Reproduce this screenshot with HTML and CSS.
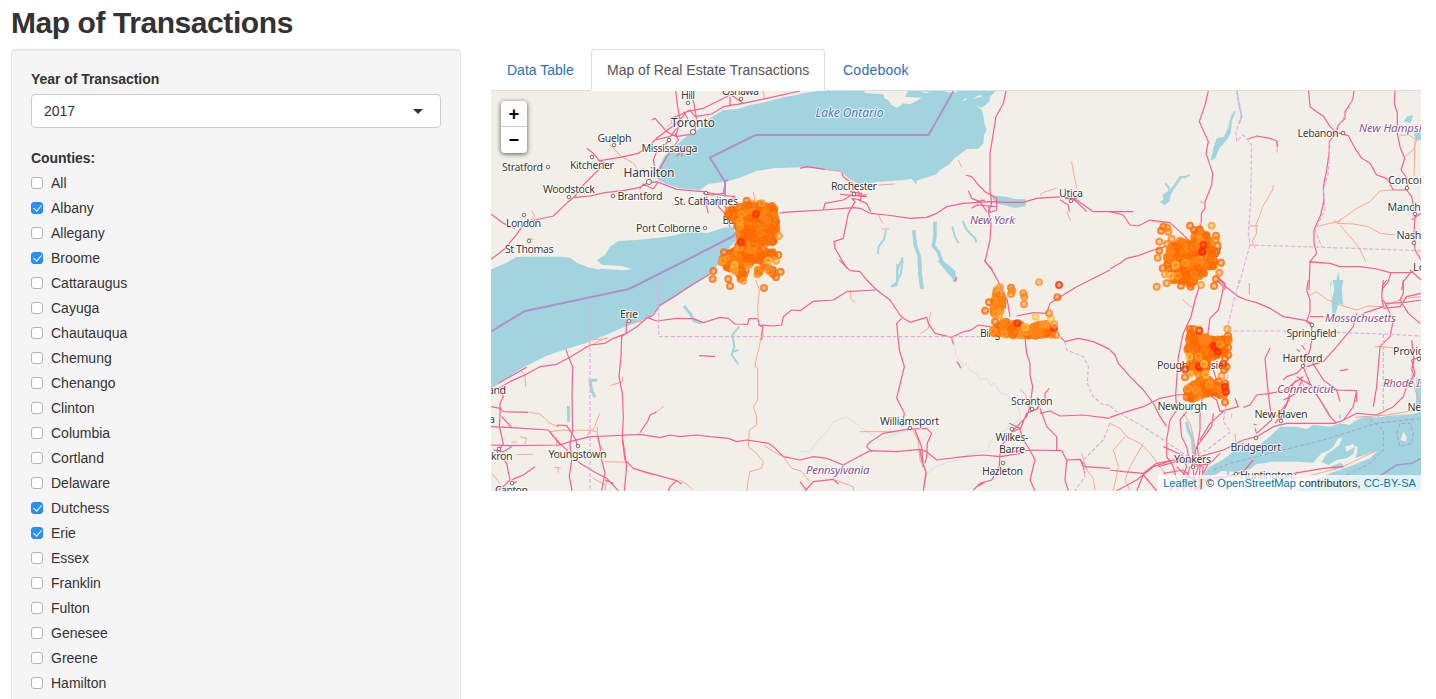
FILE: index.html
```html
<!DOCTYPE html>
<html lang="en">
<head>
<meta charset="utf-8">
<title>Map of Transactions</title>
<link rel="stylesheet" href="styles.css">
</head>
<body>
<h2 class="title">Map of Transactions</h2>
<div class="layout">
  <form class="well">
    <div class="label">Year of Transaction</div>
    <div class="select"><span class="value">2017</span><span class="caret"></span></div>
    <div class="label counties-label">Counties:</div>
    <div class="counties">
      <label class="check"><input type="checkbox"><span>All</span></label>
      <label class="check"><input type="checkbox" checked><span>Albany</span></label>
      <label class="check"><input type="checkbox"><span>Allegany</span></label>
      <label class="check"><input type="checkbox" checked><span>Broome</span></label>
      <label class="check"><input type="checkbox"><span>Cattaraugus</span></label>
      <label class="check"><input type="checkbox"><span>Cayuga</span></label>
      <label class="check"><input type="checkbox"><span>Chautauqua</span></label>
      <label class="check"><input type="checkbox"><span>Chemung</span></label>
      <label class="check"><input type="checkbox"><span>Chenango</span></label>
      <label class="check"><input type="checkbox"><span>Clinton</span></label>
      <label class="check"><input type="checkbox"><span>Columbia</span></label>
      <label class="check"><input type="checkbox"><span>Cortland</span></label>
      <label class="check"><input type="checkbox"><span>Delaware</span></label>
      <label class="check"><input type="checkbox" checked><span>Dutchess</span></label>
      <label class="check"><input type="checkbox" checked><span>Erie</span></label>
      <label class="check"><input type="checkbox"><span>Essex</span></label>
      <label class="check"><input type="checkbox"><span>Franklin</span></label>
      <label class="check"><input type="checkbox"><span>Fulton</span></label>
      <label class="check"><input type="checkbox"><span>Genesee</span></label>
      <label class="check"><input type="checkbox"><span>Greene</span></label>
      <label class="check"><input type="checkbox"><span>Hamilton</span></label>
    </div>
  </form>
  <main class="main">
    <nav class="tabs">
      <a class="tab tab-data">Data Table</a>
      <a class="tab tab-map active">Map of Real Estate Transactions</a>
      <a class="tab tab-code">Codebook</a>
    </nav>
    <div class="map">
      <svg class="tiles" width="930" height="400" viewBox="491 91 930 400">
        <rect class="land" x="491" y="91" width="930" height="400"/>

        <!-- lakes and sea -->
        <g transform="translate(490 40) scale(.33333)">
          <path class="water" d="M960 150L930 163L880 172L830 185L780 195L740 208L700 210L680 222L655 238L640 258L615 275L590 288L565 310L545 330L522 350L510 375L497 395L502 418L530 433L570 445L630 450L655 432L705 425L745 415L800 393L850 385L930 382L990 387L1055 397L1075 415L1105 432L1170 425L1240 420L1265 417L1280 435L1280 422L1325 407L1340 402L1350 390L1375 375L1395 353L1430 328L1465 326L1480 310L1482 285L1490 270L1483 250L1478 215L1468 203L1455 195L1475 203L1498 185L1500 170L1520 150Z"/>
          <path class="land" d="M1115 150L1130 160L1180 162L1183 175L1195 180L1205 195L1222 203L1240 190L1260 193L1285 180L1295 173L1245 170L1255 150ZM930 150L940 160L985 152ZM1290 155L1308 160L1320 155ZM1350 150L1390 160L1410 150ZM1415 185L1425 175L1432 178ZM1450 178L1465 165L1480 168L1460 174Z"/>
          <path class="water" d="M0 690L25 678L50 668L80 650L130 646L205 648L245 655L262 670L300 682L330 690L318 662L345 645L360 620L385 603L440 600L520 592L560 585L600 573L650 580L700 563L730 560L740 600L712 630L690 665L665 700L610 735L550 775L510 800L480 830L440 848L400 862L360 880L290 908L230 927L170 947L100 982L50 1015L0 1050Z"/>
          <path class="land" d="M-5 692L20 680L60 661L60 650L235 650L262 668L300 684L400 691L428 688L395 678L335 674L320 660L240 640L-5 640Z"/>
          <path class="water" d="M1503 466L1550 470L1575 477L1608 478L1607 499L1575 504L1540 495L1515 492Z"/>
          <path class="lake" style="stroke-width:2" d="M1188 570L1182 598L1166 620L1163 642M1238 652L1222 690L1220 735L1205 740M1387 560L1395 590L1406 610M1418 543L1430 570L1455 595L1460 607"/>
          <path class="lake" style="stroke-width:3.6" d="M1271 570L1276 615L1288 650L1290 700L1295 745M1335 545L1335 590L1330 618L1345 635L1355 665L1390 695L1395 722"/>
        </g>
        <g transform="translate(490 260) scale(.33333)">
          <path class="lake" style="stroke-width:3" d="M582 138L600 160L612 182L635 190M322 360L300 362L305 390L315 412M235 438L236 485"/>
          <path class="lake" style="stroke-width:2" d="M748 200L727 225L733 260L725 285L745 312M732 274L745 270"/>
        </g>
        <g transform="translate(1110 90) scale(.33333)">
          <path class="lake" style="stroke-width:2" d="M239 254L225 262L212 260L195 285L180 305M166 280L178 296"/>
          <path class="water" d="M240 254L210 262L196 285L180 300L172 285L175 303L157 315L160 330L150 335L163 345L178 335L182 315L192 298L204 280L216 264ZM372 62L362 80L355 110L342 140L320 145L310 175L302 212L316 205L328 175L350 150L362 130L366 90L377 65Z"/>
          <path class="lake" style="stroke-width:1.6" d="M380 0L387 45L395 80L388 100"/>
          <path class="water" d="M685 546L675 590L665 630L660 580L670 700L685 640L700 645L695 600ZM880 95L893 78L910 76L902 98ZM910 130L933 123L933 150L918 150ZM665 570L660 578L662 597Z"/>
        </g>
        <g transform="translate(1110 280) scale(.33333)">
          <path class="water" d="M270 595L300 560L345 535L372 512L440 500L470 478L500 450L510 440L560 440L590 448L610 435L660 440L690 430L720 435L735 422L770 408L800 413L830 408L860 405L905 403L933 395V640H280Z"/>
          <path class="land" d="M285 602L315 585L335 573L375 575L420 568L440 552L465 550L480 545L560 545L610 548L625 530L635 520L655 512L670 500L685 475L697 473L688 495L672 508L650 522L635 545L655 555L680 540L710 535L730 522L735 500L742 498L742 515L735 535L780 518L802 512L780 535L730 555L660 580L600 605L540 640H285ZM872 480L880 455L890 470L888 485ZM705 500L730 492L735 500L710 515Z"/>
          <path class="water" d="M350 590L352 568L358 575L356 588L395 586L398 568L400 590ZM660 560L690 548L705 558L675 570Z"/>
          <path class="lake" style="stroke-width:3.2" d="M230 425L235 450L247 475L250 510L252 550"/>
          <path class="lake" style="stroke-width:1" d="M590 300L610 335L640 370L665 415M920 290V375M928 300L932 340"/>
          <path class="water" d="M918 320L933 290V380H918ZM800 415L810 400L805 420ZM685 410L690 400L695 420ZM668 0L678 60L690 60L700 0Z"/>
        </g>
        <g transform="translate(800 260) scale(.33333)">
          <path class="lake" style="stroke-width:3.6" d="M358 0L360 40L367 88M418 0L440 28L460 50L465 65"/>
          <path class="lake" style="stroke-width:2" d="M308 0L303 40L290 68L273 80M292 12V62"/>
          <path class="river" d="M462 235L468 290L485 310L500 315L515 335L530 340L540 360L560 355L572 375L585 370L600 398L625 405L635 430L655 440L662 475L630 500L570 545L565 570L500 585L480 600L445 605L400 625L378 645L370 692M0 575L30 575L55 540L85 510L100 485L140 470L180 500L200 515L240 540L290 520L330 510L360 545L385 525"/>
        </g>

        <!-- minor roads -->
        <g transform="translate(490 40) scale(.33333)">
          <path class="minor" d="M360 315L395 350L430 370L455 405M125 512L135 530L120 542M820 153L823 175M540 230L545 250L530 260M113 595L130 598M790 455L795 480M1005 388L1060 395M1165 435L1215 432M1405 360L1415 382M1745 365L1752 405L1760 445M1165 525L1178 550M1175 567L1197 567M1650 465L1665 455L1700 445M1730 515L1742 542M450 440L450 455M1472 475L1490 490"/>
        </g>
        <g transform="translate(490 260) scale(.33333)">
          <path class="minor" d="M797 60L808 90L803 140L805 170M818 200L808 260L800 290L795 320L803 325L803 420L790 440L800 470L800 495L778 510L775 560L800 580L820 605L815 625L780 635L775 660L770 692M360 377L398 365L398 350M118 457L150 462L180 490L200 498M180 515L215 510L240 512L310 510L330 458M290 530L300 512L320 515M322 500L322 540L338 570M345 605L410 607M455 635L490 645M570 662L590 672L608 690M820 555L850 575L880 590L905 625L930 632M310 240L352 235M290 262L350 232M410 182L455 184M65 547L80 545M90 530L110 535L105 552M200 530L200 560M80 584L128 583M193 622L212 624M203 622L205 638M310 655L345 675M350 660L345 692M5 640L30 670M70 655L100 645M90 330L105 345L107 380M500 455L520 440"/>
          <path class="minor" d="M1082 93L1083 115L1095 128M1323 155L1315 190L1315 205L1290 222M1270 510L1285 545L1290 600L1310 640L1300 692M1110 515L1220 515M1590 388L1608 405L1612 440M1775 580L1790 630L1810 655L1815 690M930 630L960 665M1035 660L1090 680L1090 692"/>
        </g>
        <g transform="translate(1110 90) scale(.33333)">
          <path class="minor" d="M490 285L488 300L458 350L450 375L438 403L440 430L427 455L437 475M418 408L445 407M500 150L502 188M620 410L660 400L685 395L740 355L780 335L810 303L850 300M685 400L730 402L775 410L810 430L855 435M690 405L720 440L745 470L768 515M870 135L900 137L920 150L910 180L885 200M915 150L912 260M600 517L640 520M418 580V610M270 335L285 340M125 395L180 398M670 390L685 402L690 388"/>
        </g>
        <g transform="translate(1110 280) scale(.33333)">
          <path class="minor" d="M218 58L235 75L250 85M418 10V45M600 45L620 35L650 58L690 75L740 90L775 78L820 80L880 55L933 50M0 430L30 445L50 470L90 490L120 520L150 560L180 600M45 470L10 510L25 560L10 632M100 490L60 560L45 600L60 632M365 400L365 415M375 460L378 500M220 400L240 430L250 470L260 540M795 200L820 200L860 205M735 412L830 405L890 395L933 390M540 600L620 582L700 560L760 530L800 512M570 290L590 340M905 280L915 330L933 372"/>
        </g>

        <!-- highways -->
        <g transform="translate(490 40) scale(.33333)">
          <path class="road" d="M3 522L40 550L75 565M3 658L40 630L75 590L100 555L135 540L190 528L235 485L250 473L300 468L345 458L400 452L450 442L470 430L500 425L560 448L640 455L690 465L735 470L705 500L720 520M252 472L275 440L310 405L345 370L330 362L390 352L445 340L480 315L500 295L560 250L590 215L640 205L680 185L710 170L720 163L760 190M290 325L310 340L330 365M485 240L495 235L530 275L560 290M495 300L540 290L560 265M540 235L570 225L600 210L615 230L665 222L700 200L760 190L830 175L930 153M557 153L563 200L570 240L558 290L600 283L615 270L620 240L612 190L600 153M575 350L580 325L560 350M497 400L490 360L500 335L540 300M505 395L530 350L565 300L555 280M505 425L490 447L460 432L450 445M640 460L665 465L700 460L705 430M703 425L715 420M650 470L650 500L655 520M682 470L685 500L705 520L720 560M870 520L880 517L930 514L1000 510L1090 503L1110 505L1140 520L1190 525L1260 535L1310 532L1340 520L1370 500L1420 490L1500 485L1560 487L1600 487L1640 475L1720 470L1760 480L1810 515L1930 515M1740 470L1765 490L1790 515M720 170L720 195L740 195M580 215L595 240"/>
          <path class="road" d="M930 385L950 380L1005 388M1055 397L1060 410L1100 440L1110 470M1000 510L1005 490L1060 480L1085 465L1130 465M1085 475L1095 485L1075 520L1070 545L1060 595L1032 605L1035 625L1070 685M1080 455L1115 460L1112 480L1085 475M1050 463L1130 470M1105 480L1130 490L1142 515M1548 153L1540 190L1518 230L1505 310L1500 340L1500 450L1505 490L1495 515L1503 550L1500 600L1485 665L1508 690M1427 405L1445 410L1465 435L1485 455L1520 475L1520 510L1500 517L1495 500M1435 452L1445 475L1470 485L1490 515M1445 505L1460 495L1520 500M1460 485L1485 480M1710 480L1735 495L1738 515M1725 475L1760 475"/>
        </g>
        <g transform="translate(490 260) scale(.33333)">
          <path class="road" d="M660 42L630 60L590 85L560 105L510 135L490 165L470 175L440 200L410 220L370 235L345 250L300 255L240 292L200 313L150 320L100 347L60 365L35 380M25 370L60 350L110 322M228 268L235 290L248 320L246 400L248 510L240 550L245 600L238 650L246 692M410 185L408 220L395 230L393 290L387 350L397 400L400 470L397 530L410 620L403 692M470 172L500 183L560 175L610 176L640 188L690 172L715 175L735 192L773 193L777 176L803 176L808 195L850 198L875 195L880 170L905 150L930 152L970 124L1030 120L1070 95L1155 90M805 195L818 200L815 240"/>
          <path class="road" d="M2 440L30 445L40 455L115 457M2 500L50 502L175 510L190 530L250 590L270 610L320 640L350 655L385 692M30 380L40 410L30 430L30 470L28 500L40 550L25 575M2 555L65 557L210 555L240 545L300 530L350 528L450 523L510 533L540 525L570 530L620 525L660 530L715 535L740 545L770 540L835 550L850 560L880 590L930 600L970 590L1010 595L1060 615L1105 590L1140 572L1220 575L1290 568L1310 575L1340 600L1420 590L1480 585L1530 590L1595 580M35 470L65 502M200 500L205 495L230 497L240 512L258 540L260 555M180 515L210 555M325 530L330 560L335 600L345 640L335 692M397 540L405 600L430 625L480 640L560 662L540 680L535 692M560 662L575 672M450 518L475 480L480 465L500 455M10 570L40 575L65 560M20 575L50 610L60 660L45 675L25 690M65 660L100 645L135 620M60 672L80 665M627 287L675 290M345 660L370 670"/>
        </g>
        <g transform="translate(800 260) scale(.33333)">
          <path class="road" d="M118 0L150 32L180 35L200 60L230 90L270 120L300 165L310 175L330 187L380 172L385 190L405 220L455 232L490 215L510 212L535 195L570 200M305 175L290 190L298 270L313 320L303 360L290 415L313 460L305 500M455 235L460 253M470 305L478 315L482 325M465 65L470 52M553 0L575 30L595 65L622 120L630 170M650 168L700 158L740 160L750 130L830 80L900 45L930 30M780 230L795 245L835 235L880 245L930 268M675 235L680 280L690 310L690 345L698 380L690 440L680 470L640 510L610 550L600 580L598 620L575 660L540 670L520 690M628 490L660 505L640 515M715 445L680 460L660 510L670 540L690 570L705 600L690 660L705 692M720 445L740 500L770 530L770 570M735 400L748 385M710 445L735 420L735 400M720 460L750 453L780 468L850 465L930 475M600 580L640 575L700 570L785 572L800 600L840 598L855 620L930 625M800 600L795 660L805 692M840 598L850 620L855 640M200 560L205 550L250 520L320 508L380 505L395 520L382 550L380 590L375 610M345 510L365 560L370 620M200 560L215 575M0 665L20 692M18 690L40 665L100 658L115 672M130 615L100 655M360 570L365 600L378 635L370 692M530 680L550 670"/>
        </g>
        <g transform="translate(1110 90) scale(.33333)">
          <path class="road" d="M295 3L285 45L268 95L295 155L288 190L308 250L305 285L285 335L285 355L274 370L274 400M0 365L40 375L60 405L85 408L120 390L180 398L215 430L245 460M0 537L30 520L50 505L85 497L130 480L165 470M415 147L440 138L480 145L500 153L503 170M596 3L600 50L620 65L640 78L660 110L680 127L715 137L735 175L755 205L780 220L800 255L830 265L850 300L890 300L905 320L915 370L912 440L915 480L933 510M732 3L728 30L705 65L705 85L685 105L680 127L658 155L658 185L650 240L640 290L642 330L632 375L612 420L612 460L620 490L600 515L597 600M855 3L853 40L862 70L862 130L870 170L884 205L873 240L895 270L890 300M597 515L660 520L690 530L750 530L800 537L840 548L900 548L933 540M842 550L835 575L815 600M900 550L880 575L875 600M900 540L933 570M905 390L933 370M270 400L275 430L270 480M320 560L345 580L345 600"/>
        </g>
        <g transform="translate(1110 280) scale(.33333)">
          <path class="road" d="M268 20L255 60L243 110L220 160L205 230L200 300L197 345L200 390L180 420L170 480L170 530L190 560L200 600L180 632M320 0L340 20L335 50L325 90L300 115L295 150L290 200L300 240L320 300L290 330L275 360L270 400L270 450L262 500L270 560L265 632M330 0L345 18L385 50L410 60L440 68L480 85L520 110L590 122L605 130M595 0L590 30L600 60L600 95L590 125L605 135L605 180L600 210L580 255M600 110L640 110M480 205L465 235L472 310L475 340L485 420L440 460M400 382L420 375L440 345L480 340L530 330L560 300M375 355L385 380L330 395L320 360L290 340M0 210L15 225L25 250L60 290L100 330L130 370L150 410L170 440M0 412L50 395L100 380L150 355L200 345L290 340M0 570L40 575L100 580L140 550L190 540L240 545L270 530L340 510L400 480L440 470L490 440L530 430L600 430L670 430L690 425L740 400L800 405L850 380L880 350L890 320L915 280L905 240L933 230M590 260L640 245L680 200L730 140L740 100M580 260L560 280L530 290L520 300M560 290L610 320L680 330L740 332L730 380L700 420M580 262L600 310L660 410L680 430M580 260L590 220L640 300L680 330L690 365M690 272L715 268M440 435L430 432M440 460L435 445M740 335L740 365M820 60L850 120L840 170L810 200L800 320L790 380M825 70L880 68L933 60M820 85L870 80L890 50L933 40M880 0L880 40L870 60L895 100L930 130M820 0L815 50L820 80L760 100L740 120M905 180L912 240L905 270L915 290M560 208L570 215M575 195L585 210M830 0L815 20M230 395L210 420L215 470L230 500L240 550M340 395L300 430L270 480M310 400L305 440L260 500L245 560M100 585L80 632M100 585L140 632M190 540L130 560L80 600L20 632M145 560L215 540L280 560M200 560L230 590L270 600L340 590M160 580L220 570L250 600M250 560L300 550L330 520M160 500L215 525L230 560L200 632M240 560L220 632M265 560L240 632M280 560L270 632M250 570L255 632M290 600L250 632M300 540L280 580M550 580L640 565L700 560M560 575L550 600M430 540L400 575L320 600M520 360L560 340L575 300M500 410L530 370L550 310L580 290M495 430L520 400L510 420L540 350"/>
        </g>

        <!-- boundaries -->
        <g transform="translate(490 40) scale(.33333)">
          <path class="border" d="M0 876L103 814L417 747L590 660L730 588L740 575M705 470L705 425L660 353L797 285H1316L1390 153"/>
        </g>
        <g transform="translate(490 260) scale(.33333)">
          <path class="state" d="M300 117V692M506 50V230H1470"/>
        </g>
        <g transform="translate(800 260) scale(.33333)">
          <path class="state" d="M795 245L800 270L850 290L865 320L862 370L880 410L905 432L930 436M930 490L910 540L850 600L855 650L825 692"/>
        </g>
        <g transform="translate(1110 90) scale(.33333)">
          <path class="state" d="M380 3L395 75L378 125L380 155L400 135L410 145L425 165L422 330L415 430L420 465L640 472L933 482M420 465L385 590M728 30L700 85L685 105L660 150L655 250L640 300L645 360L615 420L635 470"/>
        </g>
        <g transform="translate(1110 280) scale(.33333)">
          <path class="state" d="M388 0L355 130L352 350L340 425L362 455L290 510L200 550M355 153H520L700 158L820 162L933 168M820 162V400M0 378L20 395L100 440L160 480L220 520L250 540"/>
          <path class="state sea" d="M310 570L360 550L500 515L640 480L800 430L933 415M780 418L820 450V510L780 550L680 600M860 460L870 430H900L910 460L905 490L870 500Z"/>
          <path class="border thin" d="M790 600L860 555L905 550L933 535"/>
        </g>

        <g class="towns"></g>

        <!-- place names -->
        <g class="names">
          <text x="681" y="99" textLength="14">Hill</text>
          <text x="722" y="95" textLength="37">Oshawa</text>
          <text class="city" x="671" y="127" textLength="44">Toronto</text>
          <text x="597.500" y="141.500" textLength="34">Guelph</text>
          <text x="641.500" y="152" textLength="56">Mississauga</text>
          <text x="570" y="168.500" textLength="44">Kitchener</text>
          <text x="502" y="171" textLength="41">Stratford</text>
          <text class="city" x="623.500" y="177" textLength="51">Hamilton</text>
          <text x="543" y="193" textLength="52">Woodstock</text>
          <text x="617.500" y="200" textLength="45">Brantford</text>
          <text x="674" y="204.500" textLength="64">St. Catharines</text>
          <text x="722.500" y="224" textLength="30">Buffalo</text>
          <text x="506" y="227" textLength="35">London</text>
          <text x="636" y="232" textLength="64.500">Port Colborne</text>
          <text x="505" y="252.500" textLength="48.500">St Thomas</text>
          <text x="620" y="317.500" textLength="18">Erie</text>
          <text x="488" y="393.500" textLength="18">and</text>
          <text x="489" y="423">a</text>
          <text x="491" y="460" textLength="21.500">kron</text>
          <text x="548.500" y="458" textLength="58">Youngstown</text>
          <text x="495" y="494" textLength="33">Canton</text>
          <text x="831" y="190" textLength="46">Rochester</text>
          <text x="1059" y="197" textLength="24">Utica</text>
          <text x="980" y="337" textLength="56">Binghamton</text>
          <text x="1011" y="405" textLength="41.500">Scranton</text>
          <text x="880" y="424.500" textLength="59">Williamsport</text>
          <text x="995.500" y="440.500" textLength="33">Wilkes-</text>
          <text x="999" y="453" textLength="26">Barre</text>
          <text x="982" y="474.500" textLength="41">Hazleton</text>
          <text x="1186" y="254" textLength="35">Albany</text>
          <text x="1297.500" y="137" textLength="41">Lebanon</text>
          <text x="1388" y="183.500" textLength="42">Concord</text>
          <text x="1387.500" y="210.500" textLength="58">Manchester</text>
          <text x="1396.500" y="239" textLength="37">Nashua</text>
          <text x="1413" y="271" textLength="33">Lowell</text>
          <text x="1286.500" y="336.500" textLength="50">Springfield</text>
          <text x="1282.500" y="362" textLength="40">Hartford</text>
          <text x="1393" y="354.500" textLength="55">Providence</text>
          <text x="1157" y="369" textLength="67">Poughkeepsie</text>
          <text x="1157.500" y="409.500" textLength="49.500">Newburgh</text>
          <text x="1254.500" y="417.500" textLength="53">New Haven</text>
          <text x="1407.500" y="411" textLength="41">Newport</text>
          <text x="1230.500" y="450.500" textLength="50.500">Bridgeport</text>
          <text x="1174" y="463" textLength="37">Yonkers</text>
          <text x="1240" y="478.500" textLength="53">Huntington</text>
          <text class="lake-name" x="815.500" y="117" textLength="68">Lake Ontario</text>
          <text class="region" x="970" y="224" textLength="45">New York</text>
          <text class="region" x="806" y="474" textLength="63.500">Pennsylvania</text>
          <text class="region" x="1359" y="131.500" textLength="79">New Hampshire</text>
          <text class="region" x="1325" y="321.500" textLength="71">Massachusetts</text>
          <text class="region" x="1277" y="393" textLength="57">Connecticut</text>
          <text class="region" x="1383" y="387" textLength="63">Rhode Island</text>
        </g>
        <g class="sales"></g>
      </svg>
      <div class="zoom"><a>+</a><a>−</a></div>
      <div class="attribution"><a>Leaflet</a> | © <a>OpenStreetMap</a> contributors, <a>CC-BY-SA</a></div>
    </div>
  </main>
</div>
<script src="map.js"></script>
</body>
</html>
```
FILE: styles.css
```css
* { box-sizing: border-box; }
html, body { height: 100%; }
body {
  margin: 0;
  padding: 6px 15px 0 11px;
  overflow: hidden;
  background: #fff;
  color: #333;
  font: 14px/20px "Helvetica Neue", "Liberation Sans", Arial, sans-serif;
}
.title {
  margin: 0 0 10px;
  font-size: 30px;
  line-height: 33px;
  font-weight: bold;
  letter-spacing: -.43px;
}
.layout { display: flex; align-items: flex-start; gap: 30px; }
.well {
  flex: none;
  width: 450px;
  padding: 19px 19px 6px;
  border: 1px solid #e3e3e3;
  border-bottom: 0;
  border-radius: 4px 4px 0 0;
  background: #f5f5f5;
  box-shadow: inset 0 1px 1px rgba(0, 0, 0, .05);
}
.label { font-weight: bold; margin-bottom: 5px; letter-spacing: -.05px; }
.select {
  display: flex;
  align-items: center;
  justify-content: space-between;
  height: 34px;
  padding: 0 17px 0 12px;
  border: 1px solid #ccc;
  border-radius: 4px;
  background: #fff;
}
.caret {
  border: 5px solid transparent;
  border-top-color: #333;
  border-bottom: 0;
}
.counties-label { margin-top: 20px; }
.counties { display: grid; grid-auto-rows: 20px; row-gap: 5px; }
.check { display: flex; align-items: center; gap: 8px; }
.check input {
  appearance: none;
  display: grid;
  place-items: center;
  width: 12px;
  height: 12px;
  margin: 0;
  border: 1px solid #b4b4b4;
  border-radius: 3px;
  background: #fff;
}
.check input:checked { border-color: #2287fb; background: #2b90ff; }
.check input:checked::after {
  content: "";
  width: 4px;
  height: 7px;
  margin-top: -2px;
  border: solid #fff;
  border-width: 0 1.600px 1.600px 0;
  transform: rotate(40deg);
}
.main { flex: none; width: 930px; }
.tabs { display: flex; gap: 2px; height: 42px; border-bottom: 1px solid #ddd; }
.tab {
  width: 98px;
  height: 42px;
  padding: 10px 0 0 15px;
  border: 1px solid transparent;
  border-radius: 4px 4px 0 0;
  color: #2a70b8;
  white-space: nowrap;
}
.tab-map { width: 234px; }
.tab-code { letter-spacing: .25px; }
.active { border-color: #ddd #ddd #fff; background: #fff; color: #555; }
.map { position: relative; height: 400px; overflow: hidden; }
.tiles { display: block; }
.land { fill: #f2efe9; }
.water { fill: #a2d4e0; }
.lake, .river, .minor, .road, .border, .state {
  fill: none;
  stroke-linejoin: round;
  vector-effect: non-scaling-stroke;
}
.lake { stroke: #a2d4e0; }
.river { stroke: #c5e1e5; stroke-width: .8; }
.minor { stroke: #fca78c; stroke-width: 1; }
.road { stroke: #f5618e; stroke-width: 1.200; }
.border { stroke: #b08fca; stroke-width: 2; }
.thin { stroke-width: 1.500; }
.state { stroke: #dfaedb; stroke-width: 1.200; stroke-dasharray: 4 2; }
.sea { stroke: #a99fd0; stroke-width: 1; }
.names {
  font: 10.700px "Noto Sans", sans-serif;
  fill: #383838;
  stroke: rgba(255, 255, 255, .75);
  stroke-width: 2px;
  stroke-linejoin: round;
  paint-order: stroke;
}
.city { font-size: 12px; }
.region { font-size: 11.500px; font-style: italic; fill: #8b5290; }
.lake-name { font-size: 12px; font-style: italic; fill: #4a7ab0; }
.town { fill: #f2efe9; stroke: #555; stroke-width: .8; }
.zoom {
  position: absolute;
  left: 10px;
  top: 10px;
  width: 26px;
  border-radius: 4px;
  background: #fff;
  box-shadow: 0 1px 5px rgba(0, 0, 0, .65);
}
.zoom a {
  display: block;
  height: 26px;
  color: #000;
  font: bold 18px/28px "Liberation Mono", monospace;
  text-align: center;
}
.zoom a:first-child { border-bottom: 1px solid #ccc; line-height: 29px; }
.attribution {
  position: absolute;
  right: 0;
  bottom: 0;
  padding: 0 5px;
  background: rgba(255, 255, 255, .7);
  font-size: 11px;
  line-height: 16px;
  letter-spacing: .08px;
}
.attribution a { color: #0078a8; }
```
FILE: map.js
```js
const NS = "http://www.w3.org/2000/svg";
function circle(parent, x, y, r, attrs) {
  const c = document.createElementNS(NS, "circle");
  c.setAttribute("cx", x);
  c.setAttribute("cy", y);
  c.setAttribute("r", r);
  for (const key in attrs) c.setAttribute(key, attrs[key]);
  parent.appendChild(c);
}

const towns = document.querySelector(".towns");
[[688,103,1.8],[741,99,1.8],[693,132,2.6],[614,145,1.8],[669,140,1.8],[592,157,1.8],[548,167,1.8],
 [649,182,2.6],[569,197,1.8],[613,196,1.8],[706,193,1.8],[524,215,1.8],[705,228,1.8],[529,241,1.8],
 [629,321,1.8],[578,446,1.8],[499,449,1.8],[512,483,1.8],[854,194,1.8],[1071,201,1.8],[1032,409,1.8],
 [910,428,1.8],[1012,429,1.8],[1003,463,1.8],[1343,133,1.8],[1407,188,1.8],[1415,214,1.8],[1414,243,1.8],
 [1312,325,1.8],[1303,366,1.8],[1419,359,1.8],[1281,421,1.8],[1256,438,1.8],[1193,467,1.8],[1236,474,1.8]
].forEach(([x, y, r]) => circle(towns, x, y, r, { class: "town" }));

// Repeatable pseudo-random sequence, so that the scatter is stable.
let seed = 7;
function rnd() {
  seed = (seed * 16807) % 2147483647;
  return seed / 2147483647;
}
function inside(x, y, poly) {
  let hit = false;
  for (let i = 0, j = poly.length - 1; i < poly.length; j = i++) {
    const [xi, yi] = poly[i], [xj, yj] = poly[j];
    if (yi > y !== yj > y && x < (xj - xi) * (y - yi) / (yj - yi) + xi) hit = !hit;
  }
  return hit;
}
const sales = document.querySelector(".sales");
const colors = { y: "#ffc04a", l: "#ff9a2b", o: "#ff8317", d: "#ff6c00", r: "#ff2a05" };
function sale(x, y, key) {
  circle(sales, x, y, 3, {
    fill: colors[key], "fill-opacity": .35,
    stroke: colors[key], "stroke-width": 2, "stroke-opacity": .8
  });
}
function scatter(poly, count, mix) {
  const xs = poly.map(p => p[0]), ys = poly.map(p => p[1]);
  const x0 = Math.min(...xs), x1 = Math.max(...xs), y0 = Math.min(...ys), y1 = Math.max(...ys);
  while (count > 0) {
    const x = x0 + rnd() * (x1 - x0), y = y0 + rnd() * (y1 - y0);
    if (!inside(x, y, poly)) continue;
    sale(x, y, mix[Math.floor(rnd() * mix.length)]);
    count--;
  }
}
function points(ox, oy, list) {
  list.forEach(([x, y, key]) => sale(ox + x / 3, oy + y / 3, key));
}

const warm = "dddddddddddddooooollloddddddodddlood";
// Erie
scatter([[728,210],[736,208],[746,203],[760,204],[775,208],[777,226],[774,242],[748,246],[734,260],[730,258],[740,242],[738,230],[735,222],[727,214]], 400, warm);
scatter([[732,251],[748,244],[768,250],[776,256],[773,260],[755,261],[748,272],[742,278],[734,270],[720,266],[718,262]], 130, warm);
scatter([[757,263],[778,268],[773,275],[757,275]], 12, "ddool");
points(700, 190, [[38,267,"d"],[85,267,"d"],[90,288,"d"],[122,267,"d"],[130,272,"l"],[192,294,"d"],[237,138,"l"],
  [242,245,"d"],[228,262,"d"],[216,48,"d"],[140,32,"d"],[40,243,"d"],[72,187,"d"],[235,195,"d"],[228,212,"l"],
  [205,212,"y"],[168,72,"r"],[123,157,"r"],[103,225,"y"],[105,242,"l"],[120,108,"l"],[118,95,"l"],[125,72,"l"],
  [185,40,"l"],[180,130,"o"],[160,160,"d"],[87,72,"d"],[218,187,"d"],[180,245,"o"]]);
// Albany
scatter([[1169,246],[1180,243],[1190,240],[1198,229],[1206,230],[1210,243],[1215,262],[1212,270],[1200,276],[1194,286],[1188,284],[1172,280],[1166,262]], 330, "ddddddddooool");
points(1145, 215, [[35,215,"o"],[200,32,"l"],[135,32,"d"],[147,45,"d"],[55,35,"d"],[48,47,"d"],[67,38,"o"],[70,50,"o"],
  [43,80,"o"],[43,107,"d"],[38,128,"o"],[80,72,"o"],[67,87,"o"],[105,77,"o"],[53,160,"d"],[60,178,"l"],[92,150,"y"],
  [77,182,"y"],[98,182,"l"],[65,205,"o"],[108,212,"d"],[137,215,"d"],[168,210,"l"],[207,213,"d"],[213,192,"d"],
  [223,173,"o"],[228,143,"d"],[213,62,"d"],[212,75,"o"],[215,110,"d"],[218,92,"d"],[120,143,"l"],[115,107,"o"],[172,110,"r"],[175,90,"r"],[172,110,"r"]]);
// Dutchess
scatter([[1189,332],[1198,334],[1210,338],[1229,339],[1228,350],[1215,358],[1205,364],[1194,358],[1187,352]], 150, "ddddddooooldd");
scatter([[1190,355],[1202,358],[1208,363],[1204,377],[1194,377],[1190,372]], 38, "ddoold");
scatter([[1188,387],[1197,382],[1206,378],[1225,388],[1224,396],[1212,393],[1188,400],[1184,397]], 160, "dddddddoool");
points(1145, 315, [[247,42,"l"],[249,62,"d"],[162,43,"y"],[163,47,"r"],[240,205,"d"],[240,262,"d"],[230,182,"l"],[245,155,"d"],
  [235,147,"r"],[237,165,"d"],[240,130,"d"],[250,120,"d"],[162,155,"r"],[162,155,"r"],[177,147,"y"],[137,177,"y"],[120,163,"r"],
  [120,187,"d"],[183,178,"y"],[160,125,"l"],[133,125,"y"],[218,110,"r"],[210,97,"r"],[205,92,"r"],[225,88,"l"],[243,230,"r"],
  [240,215,"r"],[125,247,"d"],[192,210,"l"],[135,42,"d"],[145,42,"d"],[145,70,"d"],[185,70,"o"],[130,100,"d"],[220,200,"d"]]);
// Broome
scatter([[997,289],[1003,298],[1004,303],[998,318],[992,315],[993,300]], 42, "oolldo");
scatter([[993,328],[1008,321],[1022,325],[1030,328],[1040,323],[1052,325],[1055,336],[1020,336],[992,334]], 190, "ooooldddl");
points(970, 270, [[207,37,"l"],[267,45,"r"],[262,82,"d"],[123,53,"d"],[127,62,"o"],[123,72,"o"],[160,70,"o"],[163,80,"o"],
  [162,103,"o"],[45,122,"d"],[57,97,"d"],[78,130,"l"],[197,140,"y"],[243,147,"y"],[237,130,"o"],[252,175,"r"],[258,195,"o"],
  [142,160,"r"],[253,163,"l"],[90,52,"l"],[75,155,"d"],[100,155,"o"],[165,172,"y"]]);
```
